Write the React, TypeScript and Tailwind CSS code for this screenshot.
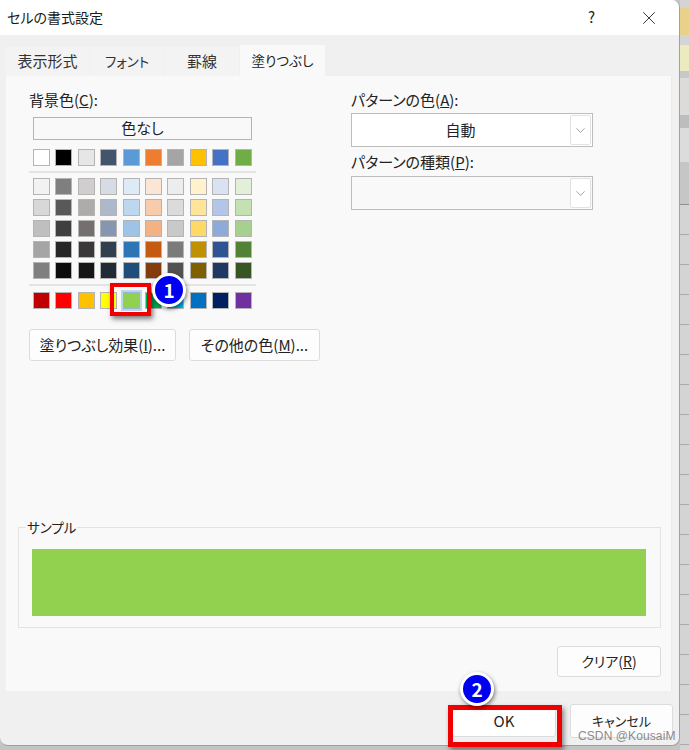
import { X, ChevronDown } from 'lucide-react'

const themeTop = ['#ffffff', '#000000', '#e7e6e6', '#44546a', '#5b9bd5', '#ed7d31', '#a5a5a5', '#ffc000', '#4472c4', '#70ad47']

const themeRows = [
  ['#f2f2f2', '#7f7f7f', '#d0cece', '#d6dce4', '#deebf6', '#fbe5d5', '#ededed', '#fff2cc', '#d9e2f3', '#e2efd9'],
  ['#d8d8d8', '#595959', '#aeabab', '#adb9ca', '#bdd7ee', '#f7cbac', '#dbdbdb', '#fee599', '#b4c6e7', '#c5e0b3'],
  ['#bfbfbf', '#3f3f3f', '#757070', '#8496b0', '#9dc3e6', '#f4b183', '#c9c9c9', '#ffd966', '#8eaadb', '#a8d08d'],
  ['#a5a5a5', '#262626', '#3a3838', '#323f4f', '#2e75b5', '#c55a11', '#7b7b7b', '#bf9000', '#2f5496', '#538135'],
  ['#7f7f7f', '#0c0c0c', '#171616', '#222a35', '#1e4e79', '#833c0b', '#525252', '#7f6000', '#1f3864', '#375623'],
]

const standard = ['#c00000', '#ff0000', '#ffc000', '#ffff00', '#92d050', '#00b050', '#00b0f0', '#0070c0', '#002060', '#7030a0']

const tabs = [
  { label: '表示形式', className: 'w-[83px] text-[15px]' },
  { label: 'フォント', className: 'w-[74px] text-[13.5px]' },
  { label: '罫線', className: 'w-[74px] text-[15px]' },
]

function SwatchRow({ colors, selected }: { colors: string[]; selected?: number }) {
  return (
    <div className="grid grid-cols-[repeat(10,17px)] gap-x-[5.4px]">
      {colors.map((color, i) => (
        <div
          key={i}
          className={`h-[17px] border ${i === selected ? 'border-[#8fb8d8] shadow-[0_0_0_2px_#bcd6ea]' : 'border-[#b4b4b4]'}`}
          style={{ backgroundColor: color }}
        />
      ))}
    </div>
  )
}

function Button({ children, className = '' }: { children: React.ReactNode; className?: string }) {
  return (
    <div className={`flex items-center justify-center rounded-[3px] border border-[#dcdcdc] bg-[#fdfdfd] text-[#222] ${className}`}>
      {children}
    </div>
  )
}

function Select({ value, disabled }: { value?: string; disabled?: boolean }) {
  return (
    <div className={`flex h-[34px] w-[242px] items-stretch border border-[#bdbdbd] ${disabled ? 'bg-[#f9f9f9]' : 'bg-white'}`}>
      <div className="flex flex-1 items-center justify-center text-[15px] text-[#222]">{value}</div>
      <div className="m-[1px] flex w-[21px] items-center justify-center rounded-[2px] border border-[#e2e2e2] bg-white">
        <ChevronDown size={15} strokeWidth={1} color="#666" />
      </div>
    </div>
  )
}

function Badge({ n, className }: { n: number; className: string }) {
  return (
    <div className={`absolute flex h-[34px] w-[34px] items-center justify-center rounded-full border-[3px] border-white bg-[#0000f0] text-[19px] font-bold text-white shadow-[1px_2px_4px_rgba(0,0,0,0.5)] ${className}`}>
      {n}
    </div>
  )
}

export default function App() {
  return (
    <div className="relative flex h-[750px] w-[689px] overflow-hidden bg-[#c4c4c4] font-['Noto_Sans_CJK_JP','Noto_Sans',sans-serif] [font-feature-settings:'palt']">
      {/* dialog */}
      <div className="flex h-[746px] w-[680px] shrink-0 flex-col overflow-hidden rounded-tr-lg rounded-b-lg border-r border-b border-[#a0a0a0] bg-[#f0f0f0]">
        <div className="flex h-[35px] shrink-0 items-center bg-white pl-[7px]">
          <span className="text-[14px] text-[#1a1a1a]">セルの書式設定</span>
          <span className="ml-auto text-[15px] text-[#222]">?</span>
          <div className="mr-[19px] ml-[43px] flex">
            <X size={22} strokeWidth={0.9} color="#111" />
          </div>
        </div>

        <div className="flex h-[41px] shrink-0 items-end pl-[6px]">
          {tabs.map((tab) => (
            <div key={tab.label} className={`mr-[1px] flex h-[29px] items-center justify-center bg-[#f3f3f3] text-[#333] ${tab.className}`}>
              {tab.label}
            </div>
          ))}
          <div className="flex h-[31px] w-[85px] items-center justify-center bg-[#f9f9f9] text-[13.5px] text-[#222]">塗りつぶし</div>
        </div>

        <div className="ml-[6px] flex h-[615px] w-[666px] shrink-0 flex-col border-r border-[#ebebeb] bg-[#f9f9f9] pt-[14px]">
          <div className="flex">
            <div className="w-[322px] pl-[23px]">
              <div className="h-[20px] text-[15px] leading-[20px] text-[#222]">背景色(<span className="underline">C</span>):</div>
              <div className="mt-[7px] ml-[4px] flex h-[23px] w-[219px] items-center justify-center border border-[#b4b4b4] text-[15px] text-[#222]">色なし</div>
              <div className="mt-[9px] ml-[4px]">
                <SwatchRow colors={themeTop} />
              </div>
              <div className="mt-[5px] h-[2px] w-[227px] bg-[#e4e4e4]" />
              <div className="mt-[5px] ml-[4px] flex flex-col gap-y-[4px]">
                {themeRows.map((row, i) => (
                  <SwatchRow key={i} colors={row} />
                ))}
              </div>
              <div className="mt-[5px] h-[2px] w-[227px] bg-[#e4e4e4]" />
              <div className="mt-[6px] ml-[4px]">
                <SwatchRow colors={standard} selected={4} />
              </div>
              <div className="mt-[20px] flex gap-x-[13px]">
                <Button className="h-[32px] w-[147px] text-[15px]">
                  <span>塗りつぶし効果(<span className="underline">I</span>)...</span>
                </Button>
                <Button className="h-[32px] w-[131px] text-[15px]">
                  <span>その他の色(<span className="underline">M</span>)...</span>
                </Button>
              </div>
            </div>
            <div className="pl-[23px]">
              <div className="h-[20px] text-[15px] leading-[20px] text-[#222]">パターンの色(<span className="underline">A</span>):</div>
              <div className="mt-[3px]">
                <Select value="自動" />
              </div>
              <div className="mt-[5px] h-[20px] text-[15px] leading-[20px] text-[#222]">パターンの種類(<span className="underline">P</span>):</div>
              <div className="mt-[4px]">
                <Select disabled />
              </div>
            </div>
          </div>

          <fieldset className="mt-auto ml-[12px] h-[111px] w-[643px] border border-[#e3e3e3] px-[13px]">
            <legend className="-ml-[6px] px-[1px] text-[13.5px] leading-[20px] text-[#222]">サンプル</legend>
            <div className="mt-[12px] h-[67px] w-[614px] bg-[#92d050]" />
          </fieldset>
          <div className="mt-[18px] mb-[14px] flex justify-end pr-[10px]">
            <Button className="h-[31px] w-[104px] text-[14px]">
              <span>クリア(<span className="underline">R</span>)</span>
            </Button>
          </div>
        </div>

        <div className="flex flex-1 items-center justify-end gap-x-[14px] pt-[6px] pr-[6px]">
          <Button className="h-[32px] w-[104px] border-[#2f7fc0] bg-white text-[15px]">OK</Button>
          <Button className="h-[34px] w-[103px] text-[13px]">キャンセル</Button>
        </div>
      </div>

      {/* spreadsheet behind the dialog */}
      <div className="flex flex-1 flex-col">
        <div className="h-[8px] shrink-0 bg-[#d4d4d4]" />
        <div className="h-[27px] shrink-0 bg-[#e8d28a]" />
        <div className="h-[10px] shrink-0 bg-[#d4d4d4]" />
        <div className="h-[26px] shrink-0 bg-[#ecebc0]" />
        <div className="h-[7px] shrink-0 bg-[#c8c8c8]" />
        <div className="h-[37px] shrink-0 bg-[#dcdbd9]" />
        <div className="h-[13px] shrink-0 bg-[#bdbdbd]" />
        <div className="h-[34px] shrink-0 bg-[#dcdcdc]" />
        <div className="h-[43px] shrink-0 border-b border-[#8e8e8e] bg-[#c6c6c6]" />
        {Array.from({ length: 19 }).map((_, i) => (
          <div key={i} className="h-[30px] shrink-0 border-b border-[#aaa] bg-[#d4d4d4]" />
        ))}
      </div>

      {/* annotations */}
      <div className="absolute top-[283px] left-[110px] h-[33px] w-[41px] border-[4px] border-[#f00000] shadow-[2px_3px_5px_rgba(0,0,0,0.5)]" />
      <Badge n={1} className="top-[273px] left-[152px]" />
      <div className="absolute top-[705px] left-[448px] h-[42px] w-[114px] border-[5px] border-[#f00000] shadow-[2px_3px_5px_rgba(0,0,0,0.45)]" />
      <Badge n={2} className="top-[672px] left-[460px]" />
      <div className="absolute top-[727px] left-[578px] font-['Liberation_Sans',sans-serif] text-[12px] tracking-[0.1px] text-[#8a8a8a]">CSDN @KousaiM</div>
    </div>
  )
}
